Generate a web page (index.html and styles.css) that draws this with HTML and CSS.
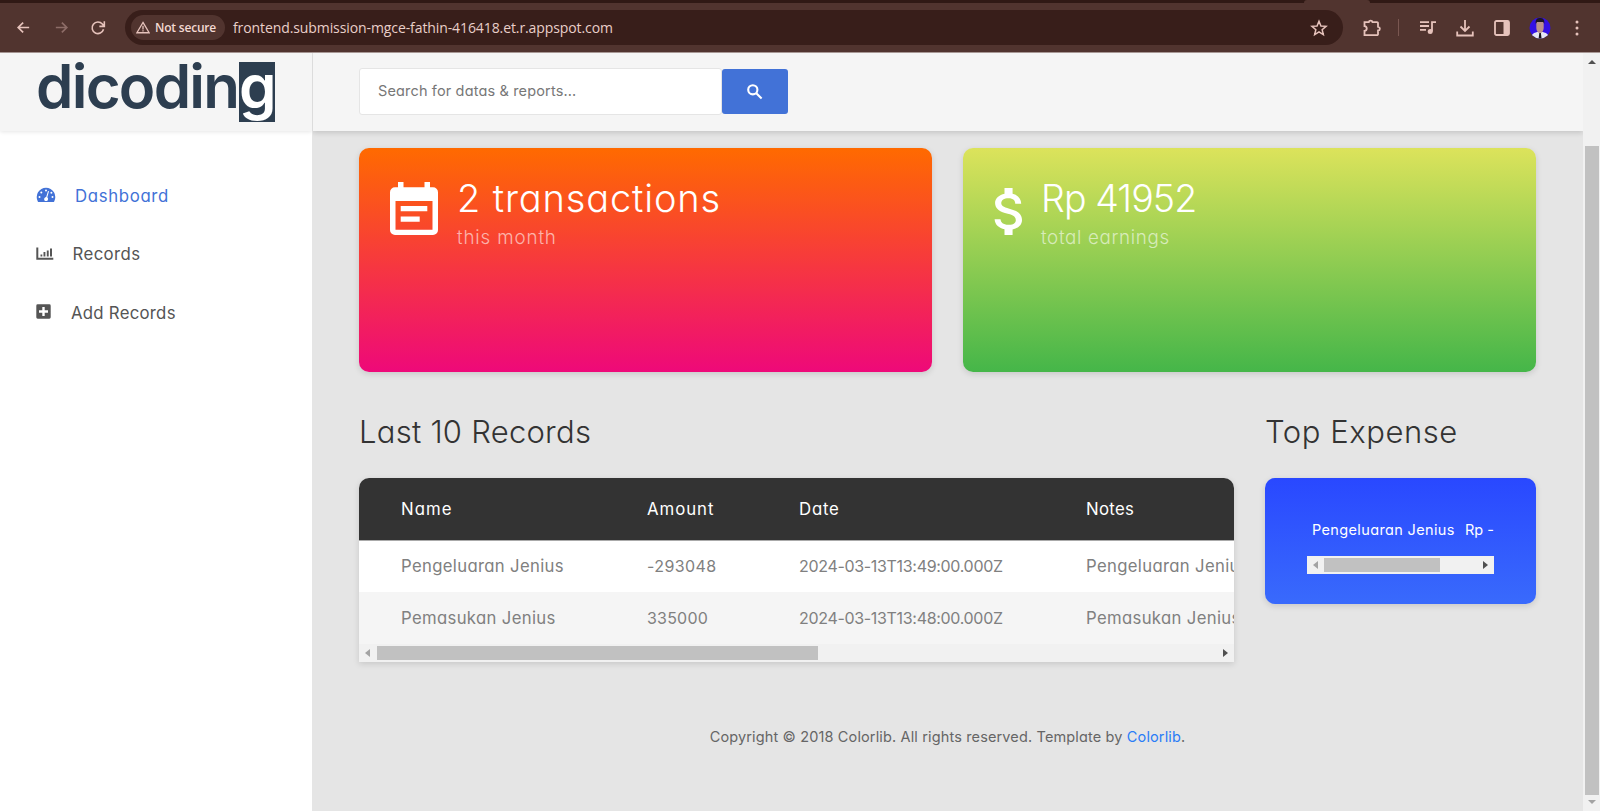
FILE: index.html
```html
<!DOCTYPE html>
<html lang="en">
<head>
<meta charset="utf-8">
<title>Dashboard</title>
<link rel="stylesheet" href="styles.css">
</head>
<body>
<div class="tabstrip"><span class="tab"></span></div>
<div class="toolbar">
  <svg class="nav-back" viewBox="0 0 24 24"><path d="M20 12H5M11.500 5L4.500 12l7 7"/></svg>
  <svg class="nav-forward" viewBox="0 0 24 24"><path d="M4 12h15M12.500 5l7 7-7 7"/></svg>
  <svg class="nav-reload" viewBox="0 0 24 24"><path d="M20.300 14A8.700 8.700 0 1 1 18.500 6L20.500 8.500M21.500 2v7.500H14"/></svg>
  <div class="address">
    <div class="chip">
      <svg viewBox="0 0 16 14"><path d="M8 1.200L15 13H1zM8 5v4.200M8 10v1.500"/></svg>
      <span class="t-chip">Not secure</span>
    </div>
    <span class="url">frontend.submission-mgce-fathin-416418.et.r.appspot.com</span>
    <svg class="star" viewBox="0 0 24 24"><path d="M12 3l2.600 6.300 6.800.5-5.200 4.400 1.600 6.600L12 17.200l-5.800 3.600 1.600-6.600L2.600 9.800l6.800-.5z"/></svg>
  </div>
  <div class="tools">
    <svg class="i-ext" viewBox="0 0 18 18"><path d="M1.500 3.200h4.300c.3-2 3.400-2 3.700 0H14a1 1 0 0 1 1 1v3.600c2.500.3 2.500 3.400 0 3.700v3.700a1 1 0 0 1-1 1H1.500v-4.400c3-.3 3-4.300 0-4.600z"/></svg>
    <span class="divider"></span>
    <svg class="i-music" viewBox="0 0 18 16"><path d="M1 2.200h9M1 6h9M1 9.800h6M13 11.500V2.200h4"/><circle cx="11.200" cy="11.500" r="2.500"/></svg>
    <svg class="i-down" viewBox="0 0 18 18"><path d="M9 1v11M4.500 7.500L9 12l4.500-4.500M1.200 12.500v4h15.600v-4"/></svg>
    <svg class="i-panel" viewBox="0 0 16 16"><rect x="1" y="1" width="14" height="14" rx="1.500"/><path class="solid" d="M9.500 1H15v14H9.500z"/></svg>
    <svg class="avatar" viewBox="0 0 22 22"><defs><clipPath id="round"><circle cx="11" cy="11" r="10.500"/></clipPath></defs><g clip-path="url(#round)"><path fill="#3410e4" d="M0 0h22v22H0z"/><path fill="#e4e6f4" d="M2 22c0-5 3-6 6-7h6c3 1 6 2 6 7z"/><path fill="#bb928b" d="M7.300 5h7.400v6c0 3-2 5-3.700 5s-3.700-2-3.700-5z"/><path fill="#1c1626" d="M6.800 7C6 2 8.500 1 11 1s5 1 4.200 6l-1-2H8z"/><path fill="#15131f" d="M10.300 16h1.600l.7 6H9.600z"/></g></svg>
    <svg class="i-more" viewBox="0 0 4 16"><circle cx="2" cy="2" r="1.500"/><circle cx="2" cy="8" r="1.500"/><circle cx="2" cy="14" r="1.500"/></svg>
  </div>
</div>
<div class="page">
  <aside class="sidebar">
    <div class="brand"><span class="brand-name">dicodin</span><span class="brand-g">g</span></div>
    <nav class="menu">
      <a class="active"><svg class="m-dash" viewBox="0 0 20 16"><path fill="currentColor" d="M10 .8a9.300 9.300 0 0 0-8.200 13.700c.2.400.5.500.9.500h14.600c.4 0 .7-.1.900-.5A9.300 9.300 0 0 0 10 .8z"/><g fill="#fff"><circle cx="10" cy="3.400" r="1"/><circle cx="5.300" cy="5.400" r="1"/><circle cx="3.500" cy="10" r="1"/><circle cx="16.500" cy="10" r="1"/><circle cx="15.400" cy="5.800" r="1"/><path d="M12 4l1 .3-1.700 6c1.400 1 .8 3-.2 3.800H9c-1.200-1-1.300-3.400 1.200-4z"/></g></svg><span class="t-m1">Dashboard</span></a>
      <a><svg class="m-chart" viewBox="0 0 18 13"><path fill="currentColor" d="M.3.500h2v10.300h15v2H.3zM4.500 7.500h1.800v2H4.500zM7.500 5h1.900v4.500H7.500zM10.800 3.500h1.900v6h-1.900zM14 1.500h2v8h-2z"/></svg><span class="t-m2">Records</span></a>
      <a><svg class="m-plus" viewBox="0 0 15 15"><path fill="currentColor" fill-rule="evenodd" d="M1.700.3h11.600a1.400 1.400 0 0 1 1.400 1.400v11.600a1.400 1.400 0 0 1-1.400 1.400H1.700a1.400 1.400 0 0 1-1.400-1.400V1.700A1.400 1.400 0 0 1 1.700.3zM6.300 3v3.300H3v2.400h3.300V12h2.400V8.700H12V6.300H8.700V3z"/></svg><span class="t-m3">Add Records</span></a>
    </nav>
  </aside>
  <main class="main">
    <header class="topbar">
      <div class="search"><span class="t-ph">Search for datas &amp; reports...</span></div>
      <div class="search-btn"><svg viewBox="0 0 16 16"><circle cx="5.800" cy="5.800" r="4.600"/><path d="M9.300 9.300l5.300 5.300"/></svg></div>
    </header>
    <div class="content">
      <div class="cards">
        <section class="card orange">
          <svg class="c-note" viewBox="0 0 48 53"><path fill="#fff" fill-rule="evenodd" d="M8 0h5.500v5.300h21V0H40v5.300h3a5 5 0 0 1 5 5V48a5 5 0 0 1-5 5H5a5 5 0 0 1-5-5V10.300a5 5 0 0 1 5-5h3zM5.500 19v28.700h37V19zM10.700 24h26.600v5.300H10.700zM10.700 34.500h19v5.300h-19z"/></svg>
          <div><h2 class="t-c1">2 transactions</h2><p class="t-c1s">this month</p></div>
        </section>
        <section class="card green">
          <svg class="c-dollar" viewBox="6.100 3 10.400 18" preserveAspectRatio="none"><path fill="#fff" d="M11.800 10.900c-2.270-.59-3-1.200-3-2.150 0-1.090 1.010-1.850 2.700-1.850 1.780 0 2.440.85 2.500 2.100h2.210c-.07-1.720-1.120-3.300-3.210-3.810V3h-3v2.160c-1.940.42-3.500 1.680-3.500 3.610 0 2.310 1.910 3.460 4.700 4.130 2.500.6 3 1.480 3 2.410 0 .69-.49 1.790-2.700 1.790-2.060 0-2.870-.92-2.980-2.100h-2.200c.12 2.190 1.760 3.420 3.680 3.830V21h3v-2.150c1.950-.37 3.500-1.500 3.500-3.550 0-2.840-2.430-3.810-4.700-4.400z"/></svg>
          <div><h2 class="t-c2">Rp 41952</h2><p class="t-c2s">total earnings</p></div>
        </section>
      </div>
      <div class="lower">
        <section class="records">
          <h3 class="t-h1">Last 10 Records</h3>
          <div class="table">
            <div class="row head"><span class="t-n">Name</span><span class="t-a">Amount</span><span class="t-d">Date</span><span class="t-no">Notes</span></div>
            <div class="row"><span class="t-pj">Pengeluaran Jenius</span><span class="t-v1">-293048</span><span class="t-dt">2024-03-13T13:49:00.000Z</span><span class="t-pj">Pengeluaran Jenius</span></div>
            <div class="row alt"><span class="t-pm">Pemasukan Jenius</span><span class="t-v2">335000</span><span class="t-dt">2024-03-13T13:48:00.000Z</span><span class="t-pm">Pemasukan Jenius</span></div>
            <div class="hbar"><i class="left"></i><i class="thumb"></i><i class="right"></i></div>
          </div>
        </section>
        <section class="expense">
          <h3 class="t-h2">Top Expense</h3>
          <div class="expense-card">
            <div class="expense-row"><span class="t-e1">Pengeluaran Jenius</span><span class="t-e2">Rp -</span></div>
            <div class="hbar small"><i class="left"></i><i class="thumb"></i><i class="right"></i></div>
          </div>
        </section>
      </div>
      <footer><span>Copyright © 2018 Colorlib. All rights reserved. Template by <a>Colorlib</a>.</span></footer>
    </div>
  </main>
  <div class="vbar"><i class="up"></i><i class="thumb"></i><i class="down"></i></div>
</div>
</body>
</html>
```
FILE: styles.css
```css
* { box-sizing: border-box; }
body { margin: 0; width: 1600px; height: 811px; overflow: hidden; display: flex; flex-direction: column; background: #51342f; font-family: Inter, "Noto Sans", sans-serif; font-feature-settings: "cv11"; color: #666; }
h2, h3, p { margin: 0; font-weight: 400; white-space: nowrap; }
svg { display: block; flex: none; }
span { white-space: nowrap; }

/* Browser chrome */
.tabstrip { flex: none; height: 3px; background: #301915; padding-left: 1304px; }
.tab { display: block; width: 66px; height: 3px; background: #51342f; border-radius: 3px 3px 0 0; }
.toolbar { flex: none; height: 50px; display: flex; align-items: center; background: #51342f; border-bottom: 1px solid #a89895; padding-left: 15px; }
.toolbar svg { fill: none; stroke: #e6c2bb; stroke-width: 2.400; }
.nav-back { width: 17px; height: 17px; }
.toolbar .nav-forward { width: 17px; height: 17px; margin-left: 21px; stroke: #8d6c67; }
.nav-reload { width: 16px; height: 16px; margin-left: 20px; }
.address { display: flex; align-items: center; width: 1218px; height: 35px; margin-left: 19px; padding-left: 6px; background: #381e1a; border-radius: 18px; }
.chip { display: flex; align-items: center; width: 94px; height: 25px; padding-left: 5px; gap: 5px; background: #51342f; border-radius: 13px; color: #f3d9d3; font: 600 12px "Open Sans", sans-serif; }
.t-chip { letter-spacing: -.2px; }
.toolbar .chip svg { width: 14px; height: 13px; stroke-width: 1.500; }
.url { flex: 1; margin-left: 8px; font: 14px "Open Sans", sans-serif; letter-spacing: -.095px; color: #e9cfc9; }
.star { width: 18px; height: 18px; margin-right: 15px; }
.toolbar .star { stroke-width: 2; }
.tools { display: flex; align-items: center; flex: 1; }
.i-ext { width: 18px; height: 18px; margin-left: 20px; }
.toolbar .i-ext, .toolbar .i-music, .toolbar .i-down, .toolbar .i-panel { stroke-width: 1.800; }
.divider { width: 1px; height: 17px; margin-left: 17px; background: #7a5751; }
.i-music { width: 18px; height: 16px; margin-left: 20px; }
.toolbar .i-music circle, .toolbar .solid, .toolbar .i-more { fill: #e6c2bb; stroke: none; }
.i-down { width: 18px; height: 18px; margin-left: 19px; }
.i-panel { width: 16px; height: 16px; margin-left: 20px; }
.avatar { width: 22px; height: 22px; margin-left: 19px; }
.toolbar .avatar { stroke: none; }
.i-more { width: 4px; height: 16px; margin-left: 24px; }

.page { flex: 1; display: flex; min-height: 0; background: #e5e5e5; }

/* Sidebar */
.sidebar { width: 313px; flex: none; background: #fff; border-right: 1px solid #e5e5e5; }
.brand { display: flex; height: 78px; padding: 9px 0 0 36px; background: #f5f5f5; box-shadow: 0 1px 4px rgba(0,0,0,.1); color: #2d3e50; font-size: 60px; font-weight: 600; line-height: 48px; }
.brand-name { width: 203px; letter-spacing: -1.750px; }
.brand-g { width: 36px; height: 60px; background: #2d3e50; color: #fff; text-align: center; }
.menu { padding: 35px 0 0 36px; }
.menu a { display: flex; align-items: center; height: 58.300px; color: #555; font-size: 16.800px; }
.menu a span { padding-top: 2px; }
.menu a.active { color: #4272d7; }
.m-dash { width: 20px; height: 16px; margin-right: 19px; }
.m-chart { width: 18px; height: 13px; margin-right: 18.500px; }
.m-plus { width: 15px; height: 15px; margin-right: 20px; }
.t-m1 { letter-spacing: .65px; }
.t-m2 { letter-spacing: .4px; }
.t-m3 { letter-spacing: .25px; }

/* Main column */
.main { width: 1270px; flex: none; }
.topbar { display: flex; height: 78px; padding: 15px 0 0 46px; background: #f5f5f5; box-shadow: 0 2px 5px rgba(0,0,0,.14); clip-path: inset(0 0 -8px 0); }
.search { display: flex; align-items: center; width: 363px; height: 47px; padding: 0 0 2px 18px; background: #fff; border: 1px solid #e5e5e5; border-radius: 3px; font-size: 14.500px; color: #777; }
.t-ph { letter-spacing: .15px; }
.search-btn { display: flex; align-items: center; justify-content: center; width: 66px; height: 45px; margin-top: 1px; border-radius: 3px; background: #4272d7; }
.search-btn svg { width: 16px; height: 16px; fill: none; stroke: #fff; stroke-width: 2.100; }
.content { padding: 17px 47px 0 46px; }

.cards { display: flex; gap: 31px; }
.card { display: flex; width: 573px; height: 224px; border-radius: 10px; color: #fff; box-shadow: 0 2px 6px rgba(0,0,0,.13); }
.orange { background: linear-gradient(#ff6a00, #ee0979); }
.green { background: linear-gradient(#dce35b, #45b649); }
.c-note { width: 48px; height: 53px; margin: 34px 19px 0 31px; }
.c-dollar { width: 28px; height: 47px; margin: 40px 19px 0 31px; }
.card h2 { margin-top: 26px; font-size: 38px; line-height: 48px; font-weight: 300; }
.card p { margin-top: 2px; font-size: 18.800px; line-height: 28px; font-weight: 300; color: rgba(255,255,255,.6); }
.card .t-c1 { letter-spacing: .85px; }
.card .t-c2 { margin-top: 27px; font-size: 37.500px; letter-spacing: -.9px; }
.card .t-c2s { margin-top: 1px; letter-spacing: .65px; }
.t-c1s { letter-spacing: .85px; }

.lower { display: flex; gap: 31px; margin-top: 36px; }
h3 { height: 48px; line-height: 48px; font-size: 31px; color: #333; font-weight: 300; }
h3.t-h1 { letter-spacing: .25px; }
h3.t-h2 { letter-spacing: .55px; }
.records { width: 875px; }
.table { margin-top: 22px; height: 184px; border-radius: 10px 10px 0 0; overflow: hidden; background: #fff; box-shadow: 0 2px 6px rgba(0,0,0,.13); }
.row { display: grid; grid-template-columns: 246px 152px 287px 148px; height: 51px; align-items: center; padding: 0 0 2px 42px; font-size: 16px; color: #808080; }
.row.head { height: 63px; padding-bottom: 0; background: #333; color: #fff; border-bottom: 1px solid #aaa; font-size: 16.800px; }
.row.alt { height: 52px; padding-bottom: 0; background: #f5f5f5; }
.t-n { letter-spacing: 1.050px; }
.t-a { letter-spacing: .95px; }
.t-d { letter-spacing: .8px; }
.t-no { letter-spacing: .3px; }
.t-pj, .t-pm { font-size: 16.700px; letter-spacing: .34px; }
.t-v1 { letter-spacing: .4px; }
.t-v2 { letter-spacing: .2px; }
.t-dt { letter-spacing: -.318px; }

/* Scrollbars */
.hbar { display: flex; align-items: center; height: 18px; background: #f1f1f1; padding: 0 6px; }
.left { width: 5px; border: 4px solid transparent; border-left-width: 0; border-right: 5px solid #a3a3a3; }
.right { width: 5px; border: 4px solid transparent; border-right-width: 0; border-left: 5px solid #505050; margin-left: auto; }
.hbar .thumb { width: 441px; height: 14px; margin-left: 7px; background: #c1c1c1; }
.hbar.small { margin-top: 14px; }
.hbar.small .thumb { width: 116px; margin-left: 6px; }
.vbar { display: flex; flex-direction: column; align-items: center; width: 17px; background: #f1f1f1; padding: 7px 0 7px; }
.up { border: 4px solid transparent; border-top-width: 0; border-bottom: 4px solid #505050; }
.vbar .thumb { width: 14px; height: 649px; margin-top: 82px; background: #c1c1c1; }
.down { border: 4px solid transparent; border-bottom-width: 0; border-top: 4px solid #a3a3a3; margin-top: auto; }

.expense-card { margin-top: 22px; width: 271px; height: 126px; border-radius: 10px; background: linear-gradient(#2948ff, #396afc); box-shadow: 0 2px 6px rgba(0,0,0,.13); padding: 40px 42px 0; }
.expense-row { display: flex; height: 24px; align-items: center; padding: 0 0 2px 5px; font-size: 14.500px; color: #fff; }
.t-e1 { width: 153px; letter-spacing: .36px; }

footer { display: flex; justify-content: center; margin-top: 63px; height: 24px; line-height: 24px; font-size: 14.500px; letter-spacing: .14px; }
footer a { color: #2a7cf7; }
```
